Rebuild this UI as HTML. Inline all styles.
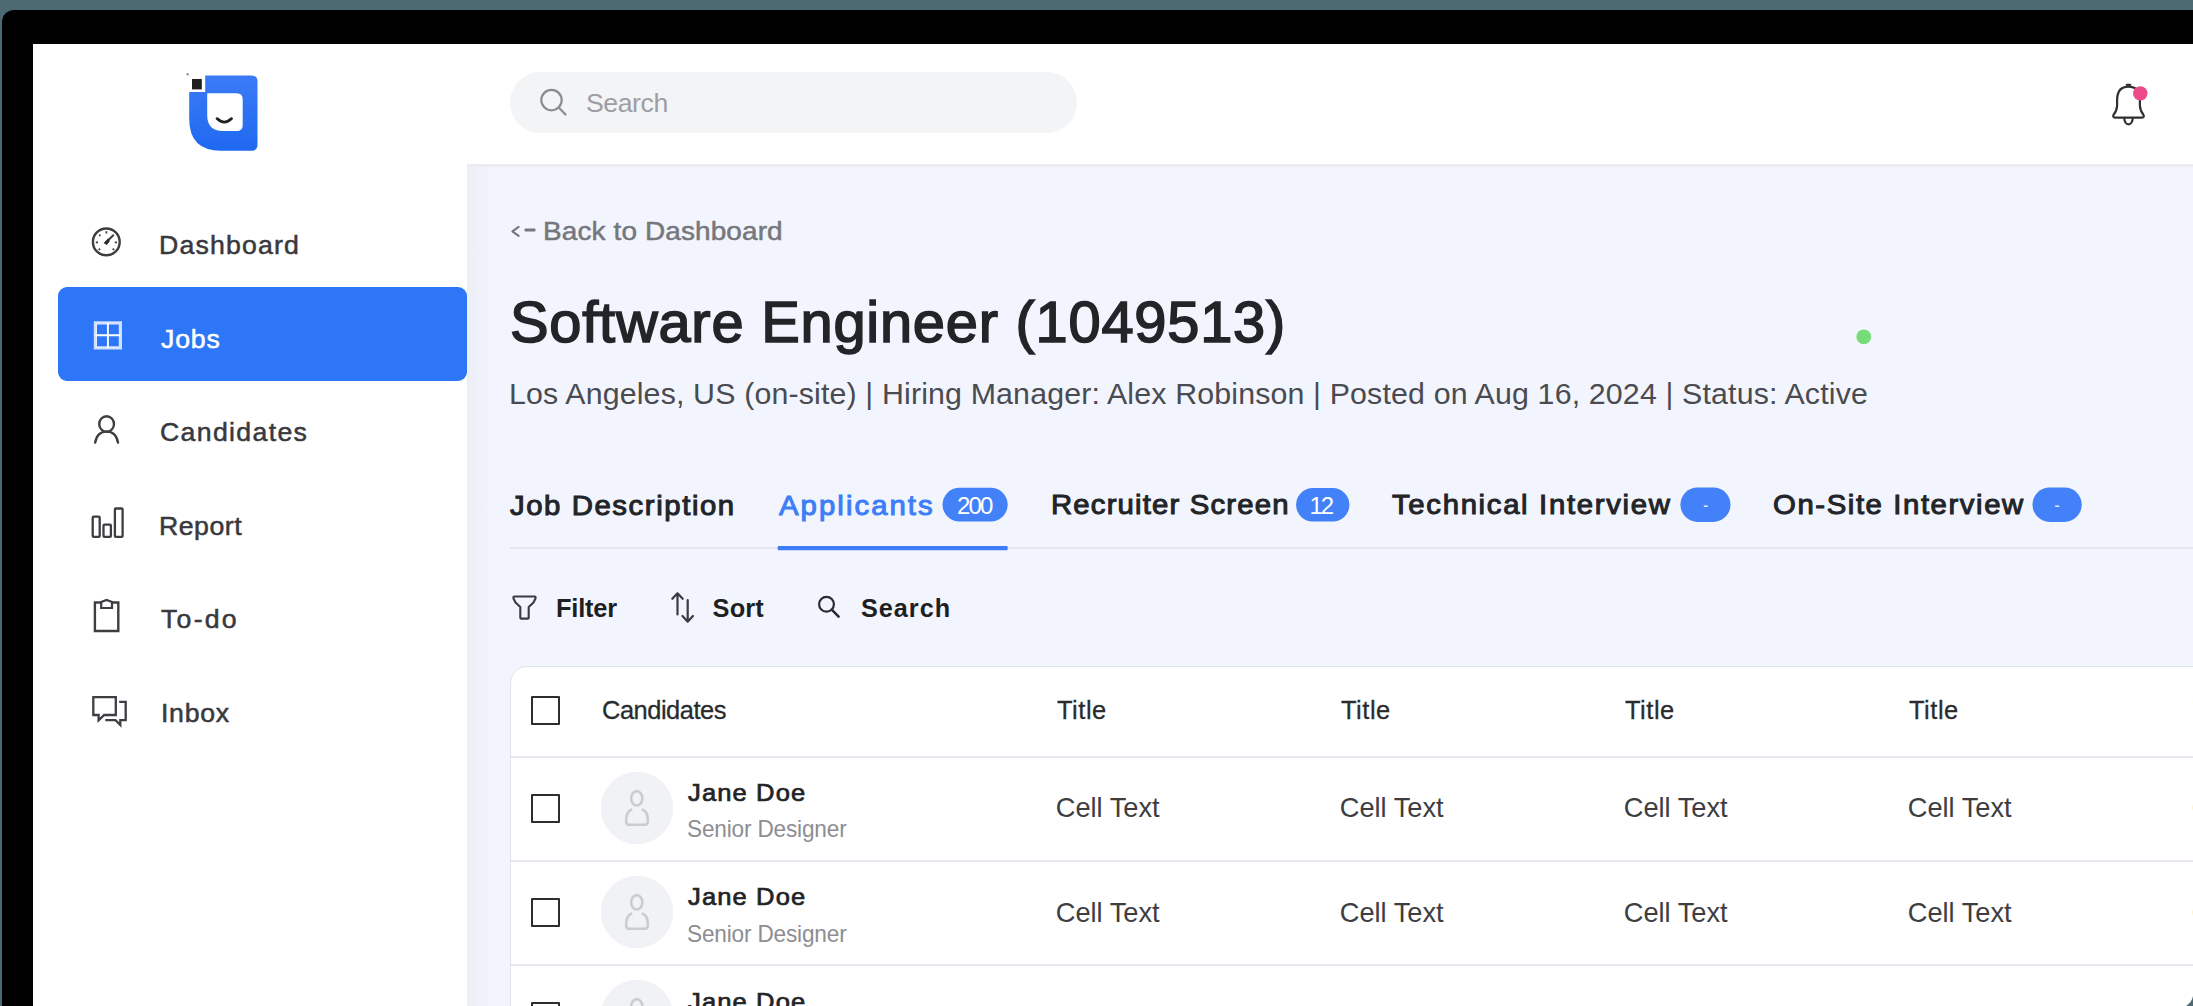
<!DOCTYPE html>
<html><head><meta charset="utf-8">
<style>
*{margin:0;padding:0;box-sizing:border-box}
html,body{width:2193px;height:1006px;overflow:hidden;background:#4d6971;font-family:"Liberation Sans",sans-serif;position:relative}
.a{position:absolute}
.t{position:absolute;white-space:nowrap;line-height:1;transform-origin:0 0}
</style></head><body>
<div class="a" style="left:2px;top:10px;width:2400px;height:1200px;background:#000;border-radius:12px"></div>
<div class="a" style="left:33px;top:44px;width:2400px;height:1200px;background:#fff"></div>
<div class="a" style="left:466.5px;top:164px;width:2000px;height:1000px;background:#f2f5fd"></div>
<div class="a" style="left:466.5px;top:164px;width:2000px;height:3px;background:#eaecf2"></div>
<div class="a" style="left:466.5px;top:167px;width:28px;height:900px;background:linear-gradient(90deg,#eceff6,#f2f5fd)"></div>
<div class="a" style="left:58.2px;top:287.3px;width:409.3px;height:93.7px;background:#2d76f7;border-radius:9px"></div>
<div class="a" style="left:509.5px;top:72.3px;width:567.5px;height:61px;background:#f3f4f6;border-radius:31px"></div>

<div class="a" style="left:510px;top:666px;width:1800px;height:500px;background:#fff;border:1.5px solid #e1e4ea;border-radius:17px"></div>
<div class="a" style="left:511px;top:755.5px;width:1700px;height:2px;background:#e6e8ee"></div>
<div class="a" style="left:511px;top:860px;width:1700px;height:2px;background:#e6e8ee"></div>
<div class="a" style="left:511px;top:964.4px;width:1700px;height:2px;background:#e6e8ee"></div>
<div class="a" style="left:531px;top:696px;width:28.8px;height:29px;border:2.6px solid #2c2d30;border-radius:1px"></div>
<div class="a" style="left:531px;top:793.5px;width:28.8px;height:29px;border:2.6px solid #2c2d30;border-radius:1px"></div>
<div class="a" style="left:531px;top:897.6px;width:28.8px;height:29px;border:2.6px solid #2c2d30;border-radius:1px"></div>
<div class="a" style="left:531px;top:1002px;width:28.8px;height:29px;border:2.6px solid #2c2d30;border-radius:1px"></div>
<svg class="a" style="left:595.4px;top:765.7px" width="84" height="84" viewBox="-42 -42 84 84"><circle r="36.2" fill="#f1f2f5"/><ellipse cx="-0.2" cy="-9.7" rx="5.6" ry="7.2" fill="none" stroke="#cbccd1" stroke-width="2.6"/><path d="M-4.8 1.2 Q-10.8 3.5 -10.8 11 V13.8 Q-10.8 16.7 -7.9 16.7 H7.9 Q10.8 16.7 10.8 13.8 V11 Q10.8 3.5 4.8 1.2" fill="none" stroke="#cbccd1" stroke-width="2.6" stroke-linejoin="round"/></svg>
<svg class="a" style="left:595.4px;top:869.8px" width="84" height="84" viewBox="-42 -42 84 84"><circle r="36.2" fill="#f1f2f5"/><ellipse cx="-0.2" cy="-9.7" rx="5.6" ry="7.2" fill="none" stroke="#cbccd1" stroke-width="2.6"/><path d="M-4.8 1.2 Q-10.8 3.5 -10.8 11 V13.8 Q-10.8 16.7 -7.9 16.7 H7.9 Q10.8 16.7 10.8 13.8 V11 Q10.8 3.5 4.8 1.2" fill="none" stroke="#cbccd1" stroke-width="2.6" stroke-linejoin="round"/></svg>
<svg class="a" style="left:595.4px;top:974.3px" width="84" height="84" viewBox="-42 -42 84 84"><circle r="36.2" fill="#f1f2f5"/><ellipse cx="-0.2" cy="-9.7" rx="5.6" ry="7.2" fill="none" stroke="#cbccd1" stroke-width="2.6"/><path d="M-4.8 1.2 Q-10.8 3.5 -10.8 11 V13.8 Q-10.8 16.7 -7.9 16.7 H7.9 Q10.8 16.7 10.8 13.8 V11 Q10.8 3.5 4.8 1.2" fill="none" stroke="#cbccd1" stroke-width="2.6" stroke-linejoin="round"/></svg>


<svg class="a" style="left:0;top:0" width="2193" height="1006" viewBox="0 0 2193 1006">
 <!-- logo -->
 <defs><linearGradient id="lg" x1="0" y1="0" x2="0" y2="1"><stop offset="0" stop-color="#3b7bf6"/><stop offset="1" stop-color="#1f69f0"/></linearGradient></defs>
 <path d="M205.2 75.5 H251.5 Q257.5 75.5 257.5 81.5 V144.5 Q257.5 150.7 251.5 150.7 H221 Q189.2 150.7 189.2 119 V92 H205.2 Z" fill="url(#lg)"/>
 <path d="M207.2 93.2 H236.5 Q242.7 93.2 242.7 99.5 V125 Q242.7 131 236.7 131 H223 Q207.2 131 207.2 115 Z" fill="#fff"/>
 <path d="M217 118.6 Q224.3 125.5 231.6 118.6" stroke="#1f1f1f" stroke-width="2.7" fill="none" stroke-linecap="round"/>
 <rect x="192" y="79" width="9.8" height="10.4" fill="#1e1e1e"/>
 <rect x="186.6" y="73.3" width="2" height="2" fill="#777"/>
 <!-- nav icons -->
 <g fill="none" stroke="#3d3e42" stroke-width="2.4">
  <circle cx="106.3" cy="241.9" r="13.4"/>
  <path d="M106.3 242.2 L113.2 235.3" stroke-width="2" stroke-linecap="round"/>
  <path d="M103.6 243 L108.4 238.2 L109.8 241.2 L106.8 244.9 Z" fill="#2a2b2e" stroke="none"/>
  <path d="M106.4 231.3 v2.2 M95.8 242.4 h2.2 M114.8 242.4 h2.2 M98.6 249.9 l1.6 -1.2 M114.2 249.9 l-1.6 -1.2 M99.2 234.6 l1.2 1.2" stroke-width="1.7"/>
 </g>
 <g fill="none" stroke="#fff" stroke-width="2.6">
  <rect x="95.1" y="322.6" width="25.6" height="25.6" stroke-opacity="0.78"/>
  <path d="M107.9 323 V348 M95.5 335.3 H120.3" stroke-width="1.9"/>
  <path d="M96.5 324 H119.3 V346.8 H96.5 Z" stroke-width="0.8"/>
 </g>
 <g fill="none" stroke="#3d3e42" stroke-width="2.4">
  <ellipse cx="106.6" cy="424" rx="7.4" ry="7.8"/>
  <path d="M95.2 442.6 Q97 431.6 106.6 431.6 Q116.2 431.6 118 442.6" stroke-linecap="round"/>
 </g>
 <g fill="none" stroke="#3d3e42" stroke-width="2.3">
  <rect x="92.7" y="516.7" width="7" height="20.2" rx="1"/>
  <rect x="103.5" y="524.7" width="7.4" height="12.2" rx="1"/>
  <rect x="114.9" y="508.5" width="7.7" height="28.4" rx="1"/>
 </g>
 <g fill="none" stroke="#3d3e42" stroke-width="2.4">
  <path d="M101 602.5 H94.9 V631 H118.3 V602.5 H112"/>
  <path d="M101.2 608 H112 V602 L106.6 600 L101.2 602 Z" stroke-width="2.2"/>
 </g>
 <g fill="none" stroke="#3d3e42" stroke-width="2.3" stroke-linejoin="miter">
  <path d="M93.3 697.2 H115.8 V715 H104.2 L98.6 720.3 V715 H93.3 Z"/>
  <path d="M119.2 701.8 H125.7 V720.2 H120.3 V725 L115.5 720.2 H105.3"/>
 </g>
 <!-- header search icon -->
 <g fill="none" stroke="#8b8c91" stroke-width="2.2">
  <circle cx="551.5" cy="100.1" r="10.2"/>
  <path d="M559 107.8 L565.5 114.6" stroke-linecap="round"/>
 </g>
 <!-- bell -->
 <g fill="none" stroke="#2f3033" stroke-width="2.2" stroke-linejoin="round" stroke-linecap="round">
  <path d="M2128.5 86.6 C2120.8 86.6 2117.2 92 2117.1 100 V105.5 C2117 109.8 2115.6 112.3 2113.6 114.8 C2112.6 116.3 2113.4 117.6 2115 117.6 H2142 C2143.6 117.6 2144.4 116.3 2143.4 114.8 C2141.4 112.3 2140 109.8 2139.9 105.5 V100 C2139.8 92 2136.2 86.6 2128.5 86.6 Z"/>
  <path d="M2126.8 84.8 H2130.2"/>
  <path d="M2124.2 118 C2124.6 122.6 2126.2 124.3 2128.5 124.3 C2130.8 124.3 2132.4 122.6 2132.8 118"/>
 </g>
 <circle cx="2140.3" cy="93.4" r="7.2" fill="#ec4a89"/>

 <!-- back chevron & dash -->
 <path d="M518.6 226.8 L512.4 231.3 L518.6 235.8" fill="none" stroke="#76777c" stroke-width="2.1" stroke-linecap="round" stroke-linejoin="round"/>
 <rect x="524.5" y="228.6" width="11" height="2.8" rx="1" fill="#76777c"/>

 <!-- green dot -->
 <circle cx="1863.8" cy="336.8" r="7.4" fill="#77dc77"/>

 <!-- tabs -->
 <rect x="510" y="547.2" width="1700" height="1.6" fill="#e2e4e9"/>
 <rect x="777.7" y="546" width="230" height="4.2" rx="1" fill="#3d7ef6"/>
 <rect x="942.5" y="487.7" width="65.2" height="33.8" rx="16.9" fill="#4281f7"/>
 <rect x="1296.1" y="488" width="53.3" height="33.6" rx="16.8" fill="#4281f7"/>
 <rect x="1680.4" y="487.4" width="50.1" height="34.5" rx="17.2" fill="#4281f7"/>
 <rect x="2032.5" y="487.4" width="49.2" height="34.5" rx="17.2" fill="#4281f7"/>
 <rect x="1703.8" y="505.4" width="4" height="1.6" fill="#dfe9ff"/>
 <rect x="2055.2" y="505.4" width="4" height="1.6" fill="#dfe9ff"/>

 <!-- filter/sort/search icons -->
 <path d="M514.5 596.5 H534.5 Q536 596.5 535.5 598.5 L533.5 602.5 L528.7 607 V617.7 Q528.7 618.6 527.8 618.6 H521.2 Q520.3 618.6 520.3 617.7 V607 L515.5 602.5 L513.5 598.5 Q513 596.5 514.5 596.5 Z" fill="none" stroke="#3a3b3f" stroke-width="2.1" stroke-linejoin="round"/>
 <g fill="none" stroke="#3a3b3f" stroke-width="2.2" stroke-linecap="round" stroke-linejoin="round">
  <path d="M677.5 593.5 V614.5 M672.3 598.8 L677.5 593.3 L682.7 598.8"/>
  <path d="M687.7 600 V621.5 M682.5 616 L687.7 621.7 L692.9 616"/>
 </g>
 <g fill="none" stroke="#2a2b2e" stroke-width="2.2">
  <circle cx="826.5" cy="604.2" r="7.4"/>
  <path d="M832 609.8 L838.6 616.6" stroke-width="2.6" stroke-linecap="round"/>
 </g>
</svg>

<div class="t" style="left:159.0px;top:232.9px;font-size:24.93px;letter-spacing:1.10px;color:#38393d;transform:scaleX(1.070);-webkit-text-stroke:0.5px currentColor;">Dashboard</div>
<div class="t" style="left:161.0px;top:326.8px;font-size:24.93px;letter-spacing:0.78px;color:#ffffff;transform:scaleX(1.070);-webkit-text-stroke:0.5px currentColor;">Jobs</div>
<div class="t" style="left:160.0px;top:419.6px;font-size:24.93px;letter-spacing:1.25px;color:#38393d;transform:scaleX(1.070);-webkit-text-stroke:0.5px currentColor;">Candidates</div>
<div class="t" style="left:159.0px;top:513.7px;font-size:24.93px;letter-spacing:0.47px;color:#38393d;transform:scaleX(1.070);-webkit-text-stroke:0.5px currentColor;">Report</div>
<div class="t" style="left:161.0px;top:607.1px;font-size:24.93px;letter-spacing:2.10px;color:#38393d;transform:scaleX(1.070);-webkit-text-stroke:0.5px currentColor;">To-do</div>
<div class="t" style="left:160.8px;top:700.6px;font-size:24.93px;letter-spacing:0.65px;color:#38393d;transform:scaleX(1.070);-webkit-text-stroke:0.5px currentColor;">Inbox</div>
<div class="t" style="left:586.0px;top:90.4px;font-size:26.68px;letter-spacing:-0.46px;color:#9d9ea3;transform:scaleX(1.000);">Search</div>
<div class="t" style="left:543.4px;top:217.9px;font-size:26.12px;letter-spacing:0.12px;color:#76777c;transform:scaleX(1.070);-webkit-text-stroke:0.5px currentColor;">Back to Dashboard</div>
<div class="t" style="left:510.0px;top:293.5px;font-size:57.82px;letter-spacing:0.77px;color:#232428;transform:scaleX(1.000);-webkit-text-stroke:1.6px currentColor;">Software Engineer (1049513)</div>
<div class="t" style="left:509.0px;top:379.7px;font-size:28.63px;letter-spacing:0.14px;color:#4a4b50;transform:scaleX(1.060);">Los Angeles, US (on-site) | Hiring Manager: Alex Robinson | Posted on Aug 16, 2024 | Status: Active</div>
<div class="t" style="left:510.4px;top:491.6px;font-size:27.40px;letter-spacing:1.48px;color:#222428;transform:scaleX(1.070);-webkit-text-stroke:1.0px currentColor;">Job Description</div>
<div class="t" style="left:778.6px;top:491.6px;font-size:27.40px;letter-spacing:1.92px;color:#3d7ef6;transform:scaleX(1.070);-webkit-text-stroke:1.0px currentColor;">Applicants</div>
<div class="t" style="left:1050.6px;top:491.0px;font-size:27.40px;letter-spacing:1.10px;color:#222428;transform:scaleX(1.070);-webkit-text-stroke:1.0px currentColor;">Recruiter Screen</div>
<div class="t" style="left:1392.2px;top:491.3px;font-size:27.40px;letter-spacing:1.57px;color:#222428;transform:scaleX(1.070);-webkit-text-stroke:1.0px currentColor;">Technical Interview</div>
<div class="t" style="left:1773.0px;top:491.3px;font-size:27.40px;letter-spacing:1.49px;color:#222428;transform:scaleX(1.070);-webkit-text-stroke:1.0px currentColor;">On-Site Interview</div>
<div class="t" style="left:957.0px;top:494.4px;font-size:24.02px;letter-spacing:-1.90px;color:#ffffff;transform:scaleX(1.000);">200</div>
<div class="t" style="left:1309.6px;top:494.4px;font-size:24.02px;letter-spacing:-2.30px;color:#ffffff;transform:scaleX(1.000);">12</div>
<div class="t" style="left:556.0px;top:596.0px;font-size:25.42px;letter-spacing:-0.22px;color:#1e1f22;transform:scaleX(1.000);font-weight:bold;">Filter</div>
<div class="t" style="left:712.6px;top:596.0px;font-size:25.42px;letter-spacing:0.13px;color:#1e1f22;transform:scaleX(1.000);font-weight:bold;">Sort</div>
<div class="t" style="left:861.0px;top:596.3px;font-size:25.28px;letter-spacing:0.96px;color:#1e1f22;transform:scaleX(1.000);font-weight:bold;">Search</div>
<div class="t" style="left:601.6px;top:697.0px;font-size:26.51px;letter-spacing:-0.50px;color:#2a2b2e;transform:scaleX(0.960);-webkit-text-stroke:0.3px currentColor;">Candidates</div>
<div class="t" style="left:1056.6px;top:697.2px;font-size:26.51px;letter-spacing:0.55px;color:#2a2b2e;transform:scaleX(0.960);-webkit-text-stroke:0.3px currentColor;">Title</div>
<div class="t" style="left:1340.6px;top:697.2px;font-size:26.51px;letter-spacing:0.55px;color:#2a2b2e;transform:scaleX(0.960);-webkit-text-stroke:0.3px currentColor;">Title</div>
<div class="t" style="left:1624.6px;top:697.2px;font-size:26.51px;letter-spacing:0.55px;color:#2a2b2e;transform:scaleX(0.960);-webkit-text-stroke:0.3px currentColor;">Title</div>
<div class="t" style="left:1908.6px;top:697.2px;font-size:26.51px;letter-spacing:0.55px;color:#2a2b2e;transform:scaleX(0.960);-webkit-text-stroke:0.3px currentColor;">Title</div>
<div class="t" style="left:687.6px;top:780.6px;font-size:23.88px;letter-spacing:1.05px;color:#222326;transform:scaleX(1.070);-webkit-text-stroke:0.7px currentColor;">Jane Doe</div>
<div class="t" style="left:686.6px;top:818.0px;font-size:23.32px;letter-spacing:-0.18px;color:#8d8e93;transform:scaleX(0.970);">Senior Designer</div>
<div class="t" style="left:1055.8px;top:794.3px;font-size:27.23px;letter-spacing:-0.01px;color:#3d3e42;transform:scaleX(1.000);">Cell Text</div>
<div class="t" style="left:1339.8px;top:794.3px;font-size:27.23px;letter-spacing:-0.01px;color:#3d3e42;transform:scaleX(1.000);">Cell Text</div>
<div class="t" style="left:1623.8px;top:794.3px;font-size:27.23px;letter-spacing:-0.01px;color:#3d3e42;transform:scaleX(1.000);">Cell Text</div>
<div class="t" style="left:1907.8px;top:794.3px;font-size:27.23px;letter-spacing:-0.01px;color:#3d3e42;transform:scaleX(1.000);">Cell Text</div>
<div class="t" style="left:687.6px;top:885.1px;font-size:23.88px;letter-spacing:1.05px;color:#222326;transform:scaleX(1.070);-webkit-text-stroke:0.7px currentColor;">Jane Doe</div>
<div class="t" style="left:686.6px;top:922.5px;font-size:23.32px;letter-spacing:-0.18px;color:#8d8e93;transform:scaleX(0.970);">Senior Designer</div>
<div class="t" style="left:1055.8px;top:898.8px;font-size:27.23px;letter-spacing:-0.01px;color:#3d3e42;transform:scaleX(1.000);">Cell Text</div>
<div class="t" style="left:1339.8px;top:898.8px;font-size:27.23px;letter-spacing:-0.01px;color:#3d3e42;transform:scaleX(1.000);">Cell Text</div>
<div class="t" style="left:1623.8px;top:898.8px;font-size:27.23px;letter-spacing:-0.01px;color:#3d3e42;transform:scaleX(1.000);">Cell Text</div>
<div class="t" style="left:1907.8px;top:898.8px;font-size:27.23px;letter-spacing:-0.01px;color:#3d3e42;transform:scaleX(1.000);">Cell Text</div>
<div class="t" style="left:687.6px;top:989.6px;font-size:23.88px;letter-spacing:1.05px;color:#222326;transform:scaleX(1.070);-webkit-text-stroke:0.7px currentColor;">Jane Doe</div>
<div class="t" style="left:686.6px;top:1027.0px;font-size:23.32px;letter-spacing:-0.18px;color:#8d8e93;transform:scaleX(0.970);">Senior Designer</div>
<div class="t" style="left:1055.8px;top:1003.3px;font-size:27.23px;letter-spacing:-0.01px;color:#3d3e42;transform:scaleX(1.000);">Cell Text</div>
<div class="t" style="left:1339.8px;top:1003.3px;font-size:27.23px;letter-spacing:-0.01px;color:#3d3e42;transform:scaleX(1.000);">Cell Text</div>
<div class="t" style="left:1623.8px;top:1003.3px;font-size:27.23px;letter-spacing:-0.01px;color:#3d3e42;transform:scaleX(1.000);">Cell Text</div>
<div class="t" style="left:1907.8px;top:1003.3px;font-size:27.23px;letter-spacing:-0.01px;color:#3d3e42;transform:scaleX(1.000);">Cell Text</div>

<div class="t" style="left:2192.6px;top:697.2px;font-size:26.51px;letter-spacing:0.55px;color:#2a2b2e;transform:scaleX(0.960);-webkit-text-stroke:0.3px currentColor;">Title</div>
<div class="t" style="left:2191.8px;top:794.3px;font-size:27.23px;letter-spacing:-0.01px;color:#3d3e42;transform:scaleX(1.000);">Cell Text</div>
<div class="t" style="left:2191.8px;top:898.8px;font-size:27.23px;letter-spacing:-0.01px;color:#3d3e42;transform:scaleX(1.000);">Cell Text</div>
<div class="t" style="left:2191.8px;top:1003.3px;font-size:27.23px;letter-spacing:-0.01px;color:#3d3e42;transform:scaleX(1.000);">Cell Text</div>

<svg class="a" style="left:2180px;top:990px" width="13" height="16" viewBox="0 0 13 16"><path d="M13 6 V16 H6 Q12 12 13 6 Z" fill="#4d6971"/></svg>
</body></html>
